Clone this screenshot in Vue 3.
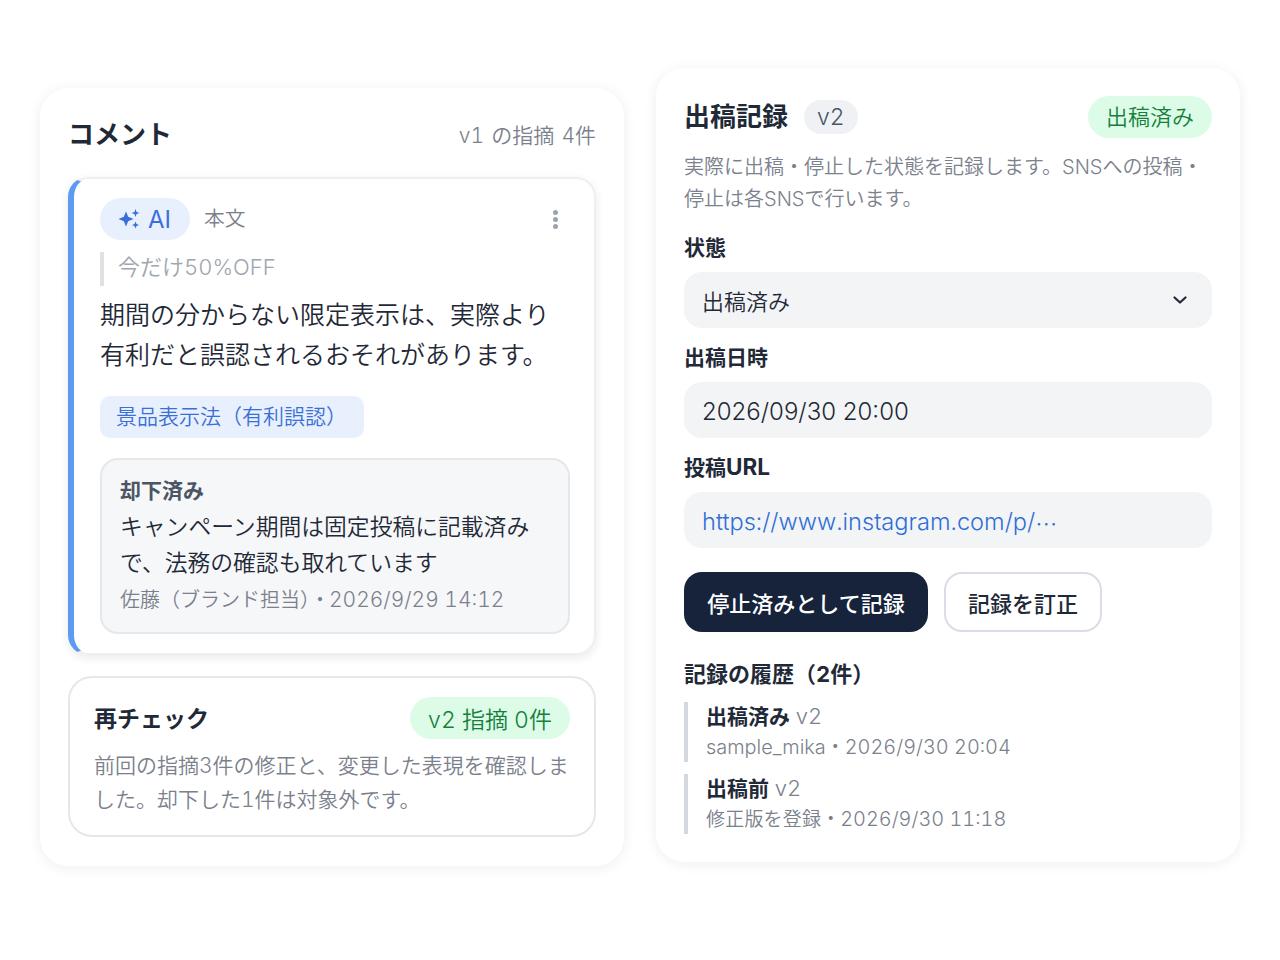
<script setup>
const history = [
  { status: '出稿済み', ver: 'v2', lead: 'sample_mika', latin: true, date: '2026/9/30 20:04' },
  { status: '出稿前', ver: 'v2', lead: '修正版を登録', latin: false, date: '2026/9/30 11:18' },
]
</script>

<template>
  <div class="page">
    <section class="panel left">
      <header class="head">
        <h2 class="title">コメント</h2>
        <span class="count">v1 の指摘 4件</span>
      </header>
      <article class="comment">
        <div class="comment-top">
          <span class="ai">
            <svg class="spark" viewBox="0 0 22 22" width="22" height="22" fill="currentColor">
              <path d="M8 3.5 10.2 8.8 15.5 11 10.2 13.2 8 18.5 5.8 13.2 .5 11 5.8 8.8Z" />
              <path d="M17.5 1 18.6 3.9 21.5 5 18.6 6.1 17.5 9 16.4 6.1 13.5 5 16.4 3.9Z" />
              <path d="M17.5 13.5 18.5 16 21 17 18.5 18 17.5 20.5 16.5 18 14 17 16.5 16Z" />
            </svg>
            AI
          </span>
          <span class="where">本文</span>
          <span class="more"><i></i><i></i><i></i></span>
        </div>
        <blockquote class="quote">今だけ50%OFF</blockquote>
        <p class="body">期間の分からない限定表示は、実際より<br />有利だと誤認されるおそれがあります。</p>
        <span class="law">景品表示法（有利誤認）</span>
        <div class="rejected">
          <div class="rej-title">却下済み</div>
          <p class="rej-body">キャンペーン期間は固定投稿に記載済み<br />で、法務の確認も取れています</p>
          <div class="rej-meta">佐藤（ブランド担当）<span class="dot">・</span><span class="date">2026/9/29 14:12</span></div>
        </div>
      </article>
      <article class="recheck">
        <div class="recheck-top">
          <h3 class="recheck-title">再チェック</h3>
          <span class="ok">v2 指摘 0件</span>
        </div>
        <p class="recheck-body">前回の指摘3件の修正と、変更した表現を確認しま<br />した。却下した1件は対象外です。</p>
      </article>
    </section>

    <section class="panel right">
      <header class="head2">
        <h2 class="title2">出稿記録</h2>
        <span class="ver">v2</span>
        <span class="state">出稿済み</span>
      </header>
      <p class="desc">実際に出稿・停止した状態を記録します。SNSへの投稿・<br />停止は各SNSで行います。</p>
      <div class="label first">状態</div>
      <div class="field select">
        <span>出稿済み</span>
        <svg viewBox="0 0 16 16" width="16" height="16" fill="none" stroke="#1f2937" stroke-width="2.2" stroke-linecap="round" stroke-linejoin="round">
          <path d="M2.5 5.5 8 10.5 13.5 5.5" />
        </svg>
      </div>
      <div class="label">出稿日時</div>
      <div class="field date-field">2026/09/30 20:00</div>
      <div class="label">投稿<span class="url-word">URL</span></div>
      <div class="field link">https://www.instagram.com/p/<span class="cjk">⋯</span></div>
      <div class="actions">
        <button class="btn primary">停止済みとして記録</button>
        <button class="btn ghost">記録を訂正</button>
      </div>
      <h3 class="hist-title">記録の履歴（2件）</h3>
      <ul class="hist">
        <li v-for="h in history" :key="h.status" class="hist-item">
          <div class="hist-line"><b>{{ h.status }}</b> <span>{{ h.ver }}</span></div>
          <div class="hist-meta"><span :class="h.latin ? 'lead-latin' : 'lead-cjk'">{{ h.lead }}</span><span class="hist-dot">・</span><span class="hist-date">{{ h.date }}</span></div>
        </li>
      </ul>
    </section>
  </div>
</template>

<style>
html, body { margin: 0; background: #fff; }
</style>

<style scoped>
.page {
  width: 1280px;
  height: 960px;
  box-sizing: border-box;
  padding: 0 40px;
  display: flex;
  align-items: flex-start;
  gap: 32px;
  font-family: Inter, "Noto Sans CJK JP", sans-serif;
  font-variant-numeric: tabular-nums;
  font-weight: 350;
  color: #1f2937;
  background: #fff;
}
.panel {
  flex: 0 0 584px;
  box-sizing: border-box;
  background: #fff;
  border-radius: 28px;
  box-shadow: 0 2px 14px rgba(17, 24, 39, 0.07);
}
.left { margin-top: 88px; padding: 28px; height: 778px; }
.right { margin-top: 68px; padding: 28px; height: 794px; }
.head { display: flex; justify-content: space-between; align-items: center; height: 32px; margin-bottom: 29px; }
.title { margin: 0; font-size: 26px; font-weight: 700; color: #1f2937; }
.count { font-size: 21px; color: #7b818c; margin-top: 4px; word-spacing: 1.5px; }
.comment {
  box-sizing: border-box;
  height: 478px;
  border: 2px solid #eeeff1;
  border-left: 6px solid #5b9bf3;
  border-radius: 20px;
  padding: 19px 24px 0 26px;
  box-shadow: 0 3px 10px rgba(17, 24, 39, 0.09);
}
.comment-top { display: flex; align-items: center; height: 42px; }
.ai {
  display: inline-flex; align-items: center; gap: 8px;
  height: 42px; width: 90px; box-sizing: border-box; padding-left: 18px;
  border-radius: 21px; background: #e8f0fe; color: #3b6fd8; font-size: 24px; font-weight: 400;
}
.where { margin: -4px 0 0 14px; font-size: 20.8px; color: #7b818c; }
.more { margin-left: auto; margin-right: 12px; display: flex; flex-direction: column; gap: 2px; }
.more i { width: 5px; height: 5px; border-radius: 50%; background: #9ca3af; display: block; }
.quote {
  margin: 12px 0 0;
  border-left: 4px solid #dfe1e4;
  padding-left: 14px;
  height: 34px; line-height: 30px;
  font-size: 22px; color: #a0a5ae;
}
.body { margin: 9px 0 0; font-size: 25px; line-height: 40px; color: #1f2937; }
.law {
  display: inline-block; margin-top: 21px;
  height: 42px; line-height: 42px; width: 264px; box-sizing: border-box; padding-left: 16px;
  border-radius: 10px; background: #e8f0fe; color: #3b6fd8; font-size: 21px;
}
.rejected {
  box-sizing: border-box; margin-top: 20px; height: 176px; width: 470px;
  background: #f6f7f9; border: 2px solid #e5e7eb; border-radius: 18px;
  padding: 13px 18px 0;
}
.rej-title { font-size: 21px; font-weight: 700; color: #4b5563; line-height: 36px; }
.rej-body { margin: 0; font-size: 22.8px; line-height: 36px; color: #1f2937; }
.rej-meta { font-size: 20px; line-height: 38px; color: #7b818c; }
.rej-meta .date { font-size: 21px; }
.dot { letter-spacing: -1px; }
.recheck {
  box-sizing: border-box; margin-top: 21px; height: 161px;
  border: 2px solid #e5e7eb; border-radius: 24px; padding: 19px 24px 0;
}
.recheck-top { display: flex; justify-content: space-between; align-items: center; height: 42px; }
.recheck-title { margin: 0 0 2px; font-size: 23px; font-weight: 700; color: #1f2937; }
.ok {
  height: 42px; line-height: 46px; padding: 0 18px; border-radius: 21px;
  background: #dcfce7; color: #15803d; font-size: 23px;
}
.recheck-body { margin: 10px 0 0; font-size: 21px; line-height: 34px; color: #7b818c; }
.head2 { display: flex; align-items: center; height: 42px; }
.title2 { margin: -6px 0 0; font-size: 26px; font-weight: 700; color: #1f2937; }
.ver {
  margin-left: 16px; height: 34px; line-height: 34px; padding: 0 13px; border-radius: 17px;
  background: #f0f1f4; color: #4b5563; font-size: 23px;
}
.state {
  margin-left: auto; height: 42px; line-height: 42px; padding: 0 18px; border-radius: 21px;
  background: #dcfce7; color: #15803d; font-size: 22px;
}
.desc { margin: 13px 0 0; font-size: 20px; line-height: 32px; color: #7b818c; }
.label { margin-top: 14px; font-size: 21px; font-weight: 700; line-height: 32px; color: #1f2937; }
.label.first { margin-top: 17px; }
.url-word { font-size: 22.5px; line-height: 1; }
.field {
  margin-top: 8px; height: 56px; box-sizing: border-box; padding: 0 18px;
  border-radius: 18px; background: #f3f4f6; display: flex; align-items: center;
  font-size: 23.6px; color: #1f2937;
}
.select { justify-content: space-between; font-size: 22px; padding-right: 24px; }
.date-field { padding-top: 3px; font-size: 24px; font-weight: 300; font-variant-numeric: normal; }
.link { color: #2f6fd6; padding-top: 3px; font-weight: 300; }
.cjk { font-family: "Noto Sans CJK JP", sans-serif; font-size: 22px; }
.actions { display: flex; gap: 16px; margin-top: 24px; }
.btn { height: 60px; box-sizing: border-box; border-radius: 18px; font-family: inherit; font-size: 22px; font-weight: 500; }
.primary { width: 244px; border: none; background: #16233b; color: #fff; }
.ghost { width: 158px; border: 2px solid #d8dde6; background: #fff; color: #1f2937; }
.hist-title { margin: 24px 0 0; font-size: 22px; font-weight: 700; line-height: 36px; color: #1f2937; }
.hist { list-style: none; margin: 10px 0 0; padding: 0; }
.hist-item { border-left: 4px solid #d4d9e1; padding-left: 18px; height: 60px; margin-bottom: 12px; }
.hist-line { font-size: 21px; line-height: 28px; color: #7b818c; }
.hist-line span { font-size: 22px; }
.hist-line b { font-weight: 700; color: #1f2937; }
.hist-meta { font-size: 19px; line-height: 32px; color: #7b818c; }
.lead-latin, .hist-date { font-size: 19.9px; }
.lead-cjk { letter-spacing: 0.2px; }
</style>
